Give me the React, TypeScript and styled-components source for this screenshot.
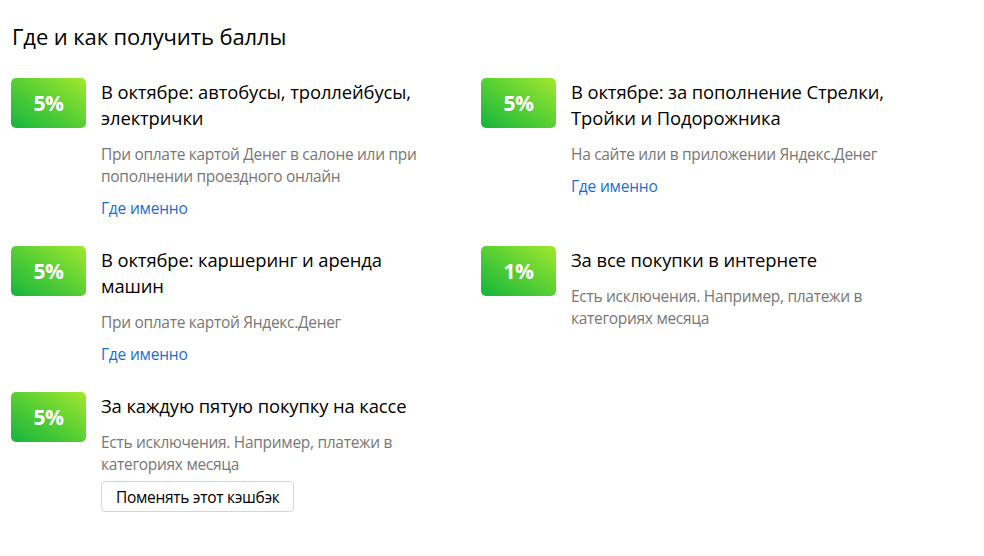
import React from 'react';
import styled, { createGlobalStyle } from 'styled-components';

const GlobalStyle = createGlobalStyle`
  body {
    margin: 0;
    background: #fff;
    font-family: "Open Sans", "Noto Sans", sans-serif;
  }
`;

interface Offer {
  percent: string;
  title: string;
  text: string;
  link?: boolean;
  change?: boolean;
}

const offers: Offer[] = [
  {
    percent: '5%',
    title: 'В октябре: автобусы, троллейбусы, электрички',
    text: 'При оплате картой Денег в салоне или при пополнении проездного онлайн',
    link: true,
  },
  {
    percent: '5%',
    title: 'В октябре: за пополнение Стрелки, Тройки и Подорожника',
    text: 'На сайте или в приложении Яндекс.Денег',
    link: true,
  },
  {
    percent: '5%',
    title: 'В октябре: каршеринг и аренда машин',
    text: 'При оплате картой Яндекс.Денег',
    link: true,
  },
  {
    percent: '1%',
    title: 'За все покупки в интернете',
    text: 'Есть исключения. Например, платежи в категориях месяца',
  },
  {
    percent: '5%',
    title: 'За каждую пятую покупку на кассе',
    text: 'Есть исключения. Например, платежи в категориях месяца',
    change: true,
  },
];

const App: React.FC = () => {
  return (
    <>
      <GlobalStyle />
      <Page>
        <Heading>Где и как получить баллы</Heading>
        <OfferGrid>
          {offers.map((o, i) => (
            <OfferItem key={i}>
              <Badge>{o.percent}</Badge>
              <OfferBody>
                <OfferTitle>{o.title}</OfferTitle>
                <OfferText>{o.text}</OfferText>
                {o.link && <OfferLink href="#">Где именно</OfferLink>}
                {o.change && <ChangeButton>Поменять этот кэшбэк</ChangeButton>}
              </OfferBody>
            </OfferItem>
          ))}
        </OfferGrid>
      </Page>
    </>
  );
};

const Page = styled.div`
  width: 984px;
  height: 556px;
  padding: 22px 0 0 11px;
  box-sizing: border-box;
  color: #000;
`;

const Heading = styled.h2`
  margin: 0 0 0 1px;
  font-size: 22px;
  font-weight: 400;
  line-height: 28px;
  letter-spacing: -0.1px;
`;

const OfferGrid = styled.div`
  display: grid;
  grid-template-columns: 470px 470px;
  row-gap: 27px;
  margin-top: 28px;
`;

const OfferItem = styled.div`
  display: flex;
  align-items: flex-start;
  gap: 15px;
`;

const Badge = styled.div`
  flex: none;
  width: 75px;
  height: 50px;
  border-radius: 5px;
  background: linear-gradient(to top right, #14b53d 0%, #5fd233 55%, #a3e82e 100%);
  color: #fff;
  font-size: 21px;
  font-weight: 700;
  display: flex;
  align-items: center;
  justify-content: center;
  letter-spacing: -0.5px;
`;

const OfferBody = styled.div`
  display: flex;
  flex-direction: column;
  align-items: flex-start;
  width: 336px;
  padding-top: 1px;
`;

const OfferTitle = styled.div`
  font-size: 18.4px;
  line-height: 26px;
  color: #000;
  letter-spacing: -0.1px;
`;

const OfferText = styled.div`
  margin-top: 12px;
  font-size: 15.5px;
  line-height: 22px;
  color: #777;
  letter-spacing: -0.3px;
`;

const OfferLink = styled.a`
  margin-top: 10px;
  font-size: 15.5px;
  line-height: 22px;
  color: #1a6fcc;
  text-decoration: none;
  letter-spacing: -0.2px;
`;

const ChangeButton = styled.button`
  margin-top: 6px;
  height: 31px;
  padding: 0 14px;
  background: #fff;
  border: 1px solid #d4d4d4;
  border-radius: 4px;
  font-family: inherit;
  font-size: 15.5px;
  color: #000;
  letter-spacing: -0.3px;
  cursor: pointer;
`;

export default App;
